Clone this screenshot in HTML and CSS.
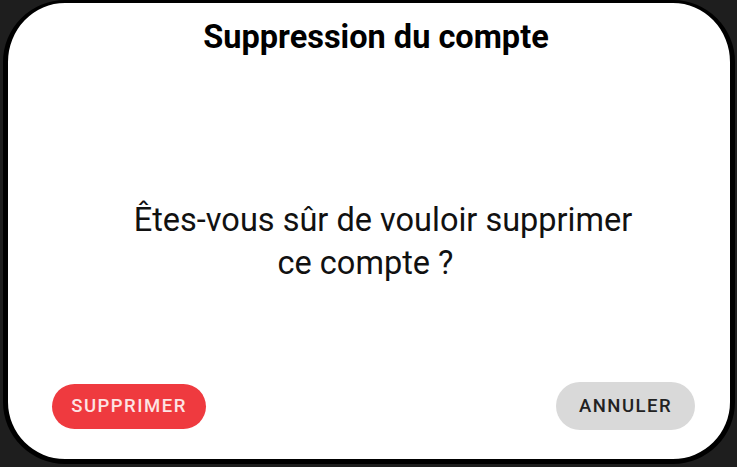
FILE: index.html
```html
<!DOCTYPE html>
<html lang="fr">
<head>
<meta charset="utf-8">
<link rel="stylesheet" href="styles.css">
</head>
<body>
<div class="dialog">
  <h1 class="title">Suppression du compte</h1>
  <div class="message">
    <div class="line line-1">Êtes-vous sûr de vouloir supprimer</div>
    <div class="line line-2">ce compte ?</div>
  </div>
  <div class="actions">
    <button class="btn btn-danger">SUPPRIMER</button>
    <button class="btn btn-neutral">ANNULER</button>
  </div>
</div>
</body>
</html>
```

FILE: styles.css
```css
html, body {
  margin: 0;
  padding: 0;
  background: #1e1e1e;
}
body {
  width: 737px;
  height: 467px;
  overflow: hidden;
  padding: 0 2px 0 3px;
  box-sizing: border-box;
  font-family: Roboto, "Liberation Sans", sans-serif;
}
.dialog {
  box-sizing: border-box;
  width: 732px;
  height: 464px;
  background: #fff;
  border: 5px solid #000;
  border-top-width: 3px;
  border-radius: 62px;
  display: flex;
  flex-direction: column;
}
.title {
  margin: 0;
  padding-top: 15px;
  padding-left: 14px;
  font-size: 32.5px;
  font-weight: 700;
  line-height: 38px;
  text-align: center;
  color: #000;
  white-space: nowrap;
}
.message {
  margin-top: 143px;
  font-size: 32.5px;
  line-height: 43px;
  color: #111;
  text-align: center;
  white-space: nowrap;
}
.line-1 { padding-left: 28px; }
.line-2 { padding-right: 7px; }
.actions {
  margin-top: auto;
  margin-bottom: 29px;
  padding: 0 35px 0 44px;
  display: flex;
  justify-content: space-between;
  align-items: center;
}
.btn {
  border: none;
  border-radius: 999px;
  font-family: Roboto, "Liberation Sans", sans-serif;
  font-size: 18.5px;
  font-weight: 500;
  letter-spacing: 1.5px;
  padding: 0;
  display: flex;
  align-items: center;
  justify-content: center;
}
.btn-danger {
  width: 154px;
  height: 45px;
  background: #ef3a3f;
  color: #fde4e4;
}
.btn-neutral {
  width: 139px;
  height: 48px;
  background: #d9d9d9;
  color: #222;
}
```
